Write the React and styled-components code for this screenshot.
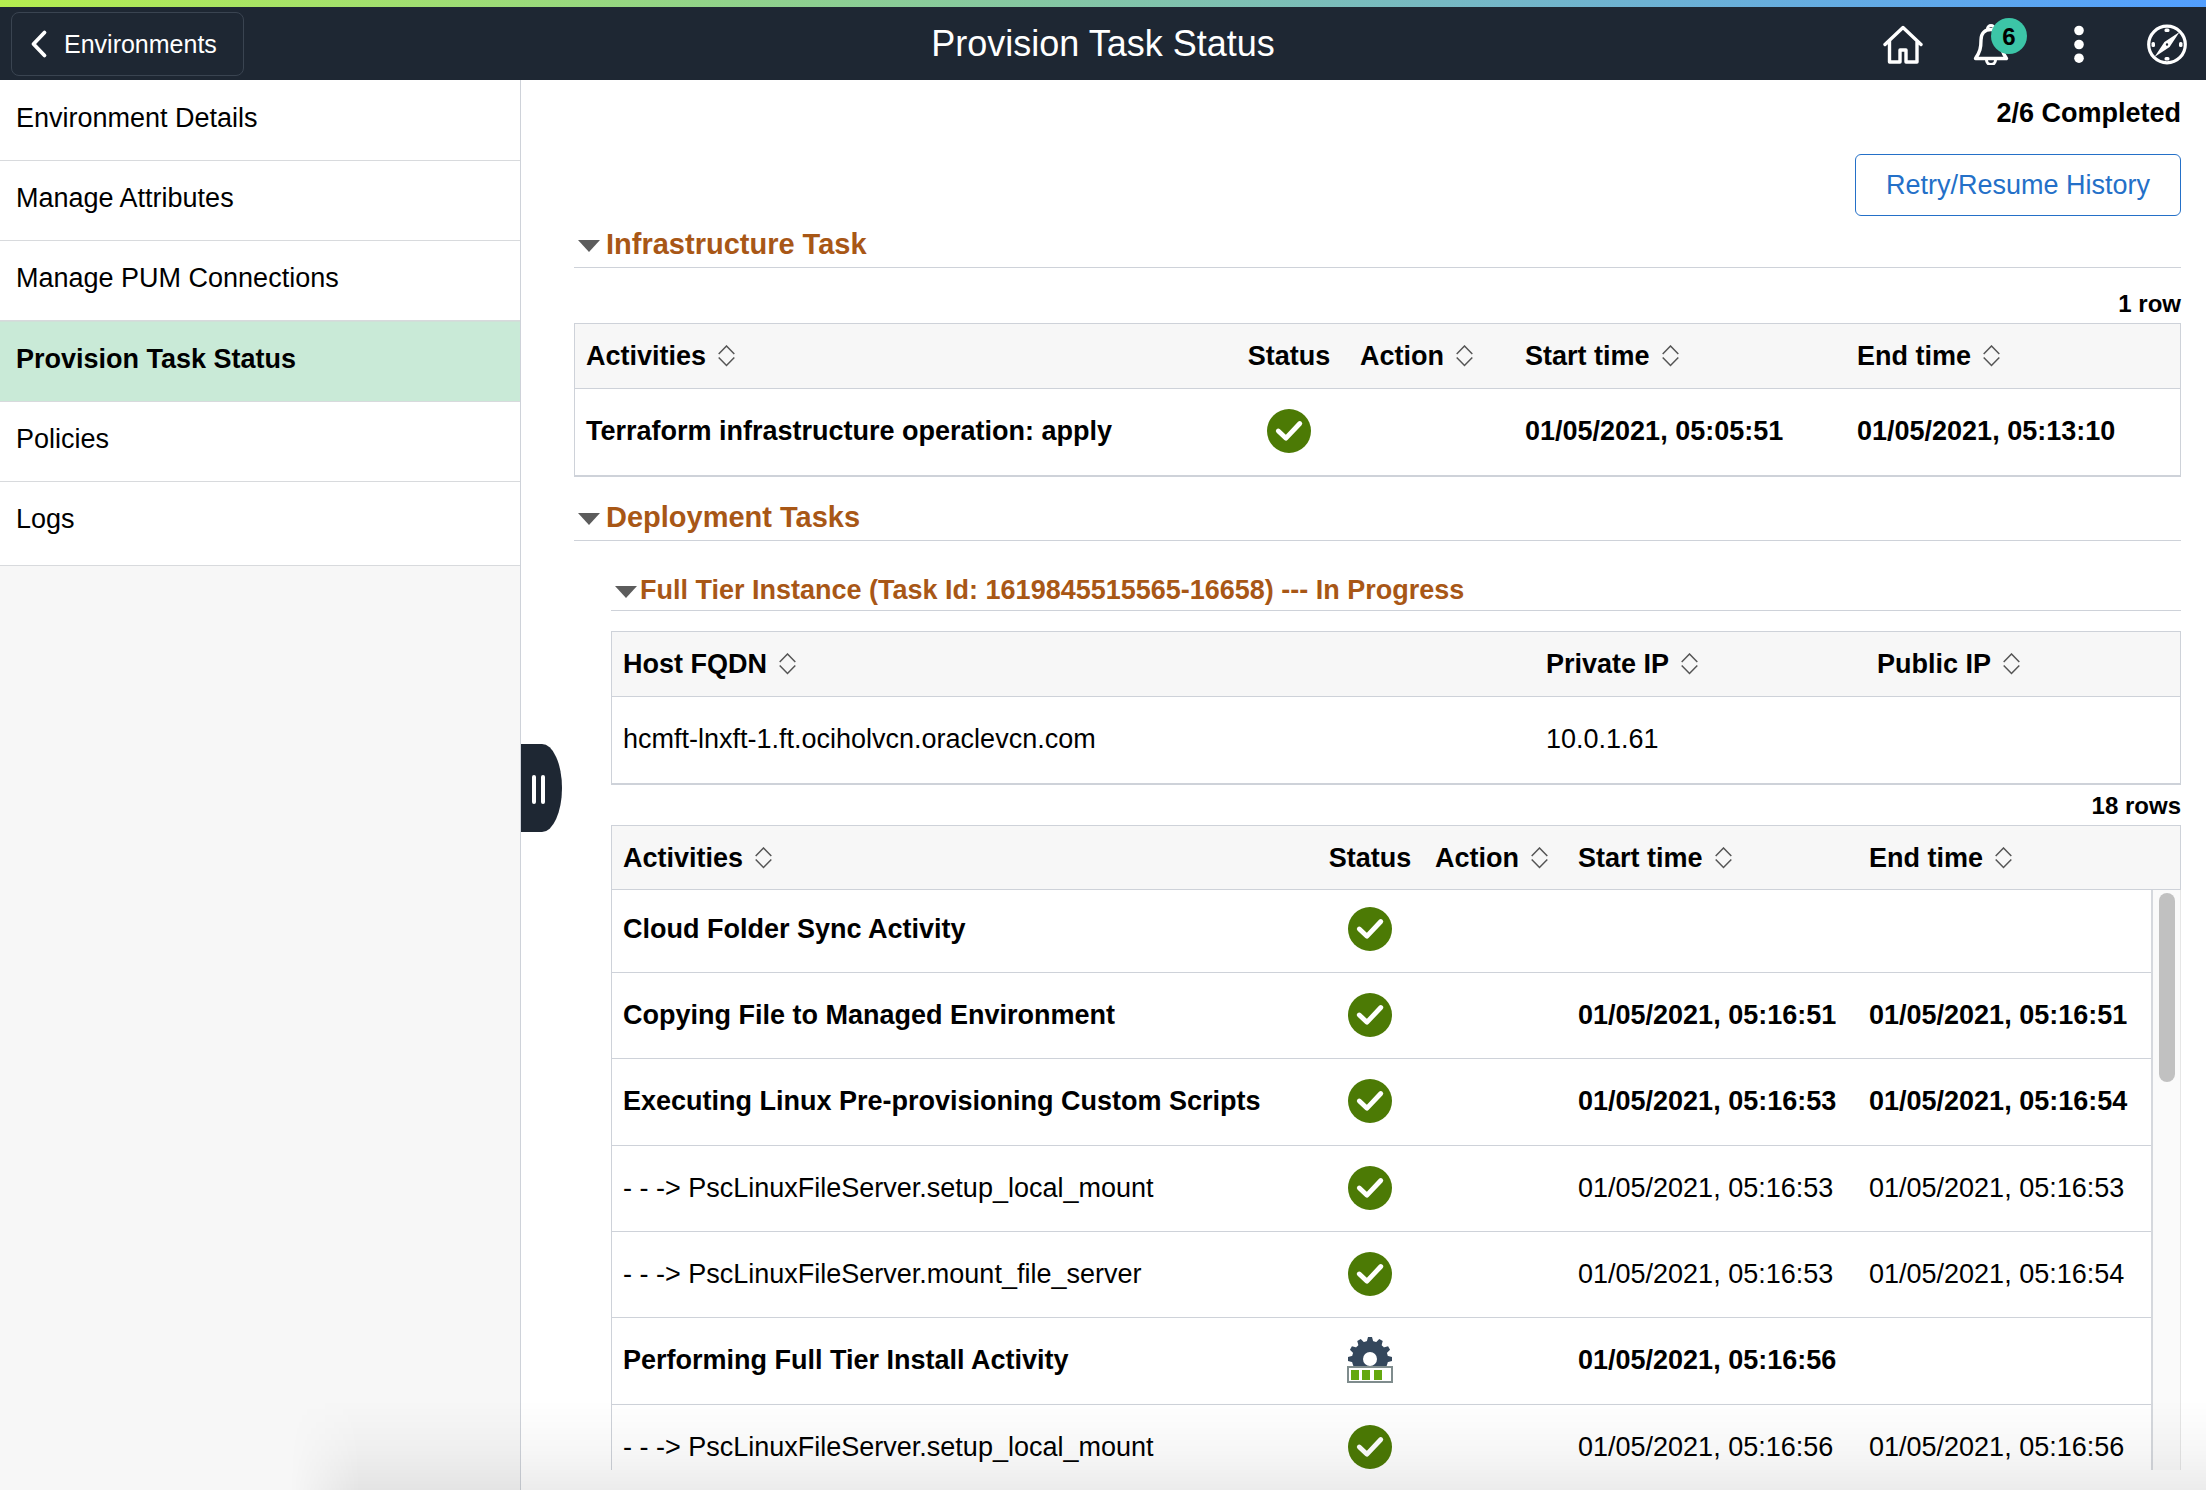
import React, { useState } from "react";
import styled, { createGlobalStyle, css } from "styled-components";

const color = {
  ink: "#000000",
  navy: "#1e2733",
  line: "#ced2d9",
  panel: "#f7f7f7",
  mint: "#c9ead7",
  heading: "#a85716",
  link: "#2470c8",
  badge: "#3cc5a7",
  ok: "#4c7a05",
};

const GlobalStyle = createGlobalStyle`
  * { box-sizing: border-box; }
  body {
    margin: 0;
    background: #ffffff;
    color: ${color.ink};
    font-family: "Liberation Sans", Arial, Helvetica, sans-serif;
    font-size: 27px;
    line-height: 32px;
  }
  button { font: inherit; color: inherit; cursor: pointer; }
  h1, h2, h3, p, ul { margin: 0; padding: 0; }
`;

const Page = styled.div`
  height: 100vh;
  display: flex;
  flex-direction: column;
  overflow: hidden;
`;

/* ---------- banner ---------- */

const Banner = styled.header`
  display: grid;
  grid-template-columns: 1fr auto 1fr;
  align-items: center;
  height: 80px;
  flex: none;
  padding: 7px 11px 0;
  color: #ffffff;
  background:
    linear-gradient(90deg, #b5ee50, #90d28a 33%, #74b7c8 68%, #529fff) top / 100% 7px no-repeat,
    ${color.navy};
`;

const BackButton = styled.button`
  justify-self: start;
  display: flex;
  align-items: center;
  gap: 16px;
  height: 64px;
  padding: 0 26px 0 18px;
  border: 1px solid #3a4451;
  border-radius: 8px;
  background: transparent;
  font-size: 25px;
`;

const PageTitle = styled.h1`
  font-size: 36px;
  line-height: 42px;
  font-weight: 400;
`;

const Tools = styled.div`
  justify-self: end;
  display: flex;
  gap: 48px;
  padding-right: 8px;
`;

const ToolButton = styled.button`
  position: relative;
  display: flex;
  width: 40px;
  height: 42px;
  padding: 0;
  border: 0;
  background: transparent;
`;

const Badge = styled.span`
  position: absolute;
  top: -5px;
  left: 20px;
  width: 36px;
  height: 36px;
  border-radius: 50%;
  background: ${color.badge};
  color: ${color.ink};
  font-size: 24px;
  font-weight: 700;
  line-height: 38px;
  text-align: center;
`;

/* ---------- body ---------- */

const Body = styled.div`
  display: flex;
  flex: 1;
  min-height: 0;
`;

const Sidebar = styled.nav`
  position: relative;
  flex: 0 0 521px;
  border-right: 1px solid ${color.line};
  background: ${color.panel};
`;

const NavList = styled.ul`
  list-style: none;
  padding: 1px 0 4px;
  background: #ffffff;
  border-bottom: 1px solid #d8dadd;
`;

const NavLink = styled.a`
  display: block;
  padding: 21px 16px 26px;
  border-bottom: 1px solid #d8dadd;
  color: ${color.ink};
  text-decoration: none;
  li:last-child > & { border-bottom: 0; }
  ${(p) =>
    p.$active &&
    css`
      border-top: 1px solid #d0e0d8;
      background: ${color.mint};
      font-weight: 700;
    `}
`;

const Handle = styled.button`
  position: absolute;
  top: calc(50% - 41px);
  left: calc(100% + 1px);
  z-index: 1;
  display: flex;
  align-items: center;
  gap: 5px;
  width: 41px;
  height: 88px;
  padding: 2px 0 0 11px;
  border: 0;
  border-radius: 0 20px 20px 0 / 0 44px 44px 0;
  background: ${color.navy};
`;

const Grip = styled.span`
  width: 4px;
  height: 29px;
  border-radius: 2px;
  background: #ffffff;
`;

const Main = styled.main`
  flex: 1;
  min-width: 0;
  display: flex;
  flex-direction: column;
  padding: 17px 25px 20px 53px;
`;

const Progress = styled.p`
  font-weight: 700;
  text-align: right;
`;

const HistoryButton = styled.button`
  align-self: flex-end;
  height: 62px;
  margin-top: 25px;
  padding: 0 30px;
  border: 1px solid ${color.link};
  border-radius: 6px;
  background: #ffffff;
  color: ${color.link};
`;

const Section = styled.section`
  display: flex;
  flex-direction: column;
  min-height: 0;
  flex: ${(p) => (p.$fill ? "1" : "none")};
  margin: ${(p) => p.$top}px 0 0 ${(p) => (p.$nested ? 37 : 0)}px;
`;

const Heading = styled.h2`
  flex: none;
  border-bottom: 1px solid ${color.line};
  color: ${color.heading};
  font-size: ${(p) => (p.$small ? 27 : 29)}px;
  line-height: ${(p) => (p.$small ? 32 : 34)}px;
  padding-bottom: ${(p) => (p.$small ? 4 : 6)}px;
`;

const Toggle = styled.button`
  display: flex;
  align-items: center;
  gap: ${(p) => (p.$small ? 3 : 6)}px;
  padding: 0 0 0 4px;
  border: 0;
  background: transparent;
  svg { margin-top: 3px; }
`;

const RowCount = styled.p`
  flex: none;
  margin: ${(p) => p.$top}px 0 5px;
  font-size: 24px;
  line-height: 28px;
  font-weight: 700;
  text-align: right;
`;

/* ---------- tables ---------- */

const Table = styled.table`
  width: 100%;
  flex: none;
  table-layout: fixed;
  border-collapse: separate;
  border-spacing: 0;
  border: 1px solid ${color.line};
  border-bottom-width: 2px;
  margin-top: ${(p) => p.$top || 0}px;
`;

const Th = styled.th`
  height: ${(p) => (p.$short ? 64 : 65)}px;
  padding: 0 11px;
  border-bottom: 1px solid ${color.line};
  background: ${color.panel};
  text-align: ${(p) => (p.$center ? "center" : "left")};
  white-space: nowrap;
`;

const SortButton = styled.button`
  display: flex;
  align-items: center;
  gap: 12px;
  padding: 0;
  border: 0;
  background: transparent;
  font-weight: 700;
`;

const Td = styled.td`
  height: 86px;
  padding: 0 11px 2px;
  font-weight: ${(p) => (p.$bold ? 700 : 400)};
  text-align: ${(p) => (p.$center ? "center" : "left")};
  white-space: nowrap;
  svg { display: block; margin: 0 auto; }
`;

const ScrollFrame = styled.div`
  position: relative;
  flex: 1;
  min-height: 0;
  overflow: hidden;
`;

const ActivityRow = styled.tr`
  ${Td} { border-bottom: 1px solid ${color.line}; }
  ${Td}:last-child { border-bottom: 0; }
  &:first-child ${Td} { height: 83px; padding-bottom: 5px; }
  &:nth-child(3n) ${Td} { height: 87px; }
`;

const Track = styled.div`
  position: absolute;
  top: 65px;
  right: 0;
  bottom: 0;
  width: 30px;
  padding: 3px 6px;
  border-left: 2px solid #d5d8dd;
  border-right: 1px solid #e6e6e6;
  background: #fafafa;
`;

const Thumb = styled.div`
  width: 16px;
  height: 189px;
  border-radius: 8px;
  background: #c1c1c1;
`;

const BottomShade = styled.div`
  position: fixed;
  left: 290px;
  right: 0;
  bottom: 0;
  height: 90px;
  pointer-events: none;
  background: linear-gradient(rgba(0, 0, 0, 0), rgba(0, 0, 0, 0.03) 55%, rgba(0, 0, 0, 0.075));
  mask-image: linear-gradient(90deg, transparent, #000 70px);
`;

/* ---------- drawings ---------- */

const stroke = {
  fill: "none",
  stroke: "currentColor",
  strokeWidth: 3.4,
  strokeLinecap: "round",
  strokeLinejoin: "round",
};

const BackIcon = () => (
  <svg width="18" height="36" viewBox="0 0 18 36" aria-hidden="true">
    <path d="M14.500 6.500 L3.500 18 L14.500 29.500" {...stroke} strokeWidth="3.800" />
  </svg>
);

const HomeIcon = () => (
  <svg width="40" height="42" viewBox="0 0 40 42" aria-hidden="true">
    <path d="M2 21.500 L20 4.500 L38 21.500 M6.500 18 V39 H17 V27 H23 V39 H34 V18" {...stroke} />
  </svg>
);

const BellIcon = () => (
  <svg width="40" height="42" viewBox="0 0 40 42" aria-hidden="true">
    <path d="M4.500 35.500 C9 29 10 25 10 17 C10 10 14 6.500 20 6.500 C26 6.500 30 10 30 17 C30 25 31 29 35.500 35.500 Z" {...stroke} />
    <path d="M16.500 6 A3.500 3.500 0 0 1 23.500 6 M15.500 37 A4.500 4.500 0 0 0 24.500 37" {...stroke} strokeWidth="3" />
  </svg>
);

const DotsIcon = () => (
  <svg width="40" height="42" viewBox="0 0 40 42" fill="currentColor" aria-hidden="true">
    <circle cx="20" cy="7.500" r="4.800" />
    <circle cx="20" cy="21.500" r="4.800" />
    <circle cx="20" cy="35.200" r="4.800" />
  </svg>
);

const CompassIcon = () => (
  <svg width="40" height="42" viewBox="0 0 40 42" aria-hidden="true">
    <circle cx="20" cy="21.500" r="18.300" {...stroke} strokeWidth="3.200" />
    <path
      fillRule="evenodd"
      fill="currentColor"
      d="M32.500 9 L22.600 24 L7.500 34 L17.400 19 Z M20 20.300 A1.200 1.200 0 1 0 20 22.700 A1.200 1.200 0 1 0 20 20.300 Z"
    />
    <g fill="currentColor">
      <rect x="17.500" y="5.500" width="5" height="3.500" rx="1.500" />
      <rect x="17.500" y="34" width="5" height="3.500" rx="1.500" />
      <rect x="4.500" y="19" width="3.500" height="5" rx="1.500" />
      <rect x="32" y="19" width="3.500" height="5" rx="1.500" />
    </g>
  </svg>
);

const Triangle = () => (
  <svg width="22" height="12" viewBox="0 0 22 12" aria-hidden="true">
    <path d="M0 0 H22 L11 12 Z" fill="#5c5c5c" />
  </svg>
);

const SortIcon = () => (
  <svg width="17" height="22" viewBox="0 0 17 22" aria-hidden="true">
    <path
      d="M0.700 9 L8.500 1 L16.300 9 M0.700 12.500 L8.500 20.500 L16.300 12.500"
      fill="none"
      stroke="#555555"
      strokeWidth="1.500"
    />
  </svg>
);

const DoneIcon = () => (
  <svg width="44" height="44" viewBox="0 0 44 44" role="img" aria-label="Completed">
    <circle cx="22" cy="22" r="22" fill={color.ok} />
    <path d="M11.300 22 L19 29.200 L32.800 14.500" {...stroke} stroke="#ffffff" strokeWidth="4.800" />
  </svg>
);

const TEETH = [-90, -60, -30, 0, 30, 60, 90];

const RunningIcon = () => (
  <svg width="46" height="46" viewBox="0 0 46 46" role="img" aria-label="In progress">
    <g fill="#34475c">
      <circle cx="23" cy="22" r="18" />
      {TEETH.map((angle) => (
        <path key={angle} d="M19.500 5.500 L21 0 H25 L26.500 5.500 Z" transform={`rotate(${angle} 23 22)`} />
      ))}
    </g>
    <circle cx="23" cy="22" r="7" fill="#ffffff" />
    <rect x="1" y="30" width="44" height="15" fill="#ffffff" stroke="#7f8c8d" strokeWidth="2" />
    <g fill="#64a80f">
      <rect x="4" y="33" width="8" height="10" />
      <rect x="15" y="33" width="8" height="10" />
      <rect x="27" y="33" width="8" height="10" />
    </g>
  </svg>
);

/* ---------- data ---------- */

const NAV = [
  "Environment Details",
  "Manage Attributes",
  "Manage PUM Connections",
  "Provision Task Status",
  "Policies",
  "Logs",
];

const INFRA = [
  {
    name: "Terraform infrastructure operation: apply",
    bold: true,
    status: "done",
    start: "01/05/2021, 05:05:51",
    end: "01/05/2021, 05:13:10",
  },
];

const ACTIVITIES = [
  { name: "Cloud Folder Sync Activity", bold: true, status: "done", start: "", end: "" },
  { name: "Copying File to Managed Environment", bold: true, status: "done", start: "01/05/2021, 05:16:51", end: "01/05/2021, 05:16:51" },
  { name: "Executing Linux Pre-provisioning Custom Scripts", bold: true, status: "done", start: "01/05/2021, 05:16:53", end: "01/05/2021, 05:16:54" },
  { name: "- - -> PscLinuxFileServer.setup_local_mount", status: "done", start: "01/05/2021, 05:16:53", end: "01/05/2021, 05:16:53" },
  { name: "- - -> PscLinuxFileServer.mount_file_server", status: "done", start: "01/05/2021, 05:16:53", end: "01/05/2021, 05:16:54" },
  { name: "Performing Full Tier Install Activity", bold: true, status: "running", start: "01/05/2021, 05:16:56", end: "" },
  { name: "- - -> PscLinuxFileServer.setup_local_mount", status: "done", start: "01/05/2021, 05:16:56", end: "01/05/2021, 05:16:56" },
];

/* ---------- parts ---------- */

function Disclosure({ title, small, children, ...rest }) {
  const [open, setOpen] = useState(true);
  return (
    <Section {...rest}>
      <Heading as={small ? "h3" : "h2"} $small={small}>
        <Toggle type="button" $small={small} aria-expanded={open} onClick={() => setOpen(!open)}>
          <Triangle />
          {title}
        </Toggle>
      </Heading>
      {open && children}
    </Section>
  );
}

function SortableTh({ children, ...rest }) {
  return (
    <Th scope="col" {...rest}>
      <SortButton type="button">
        {children}
        <SortIcon />
      </SortButton>
    </Th>
  );
}

function ActivityHead({ short, gutter }) {
  return (
    <thead>
      <tr>
        <SortableTh $short={short}>Activities</SortableTh>
        <Th scope="col" $short={short} $center>Status</Th>
        <SortableTh $short={short}>Action</SortableTh>
        <SortableTh $short={short}>Start time</SortableTh>
        <SortableTh $short={short}>End time</SortableTh>
        {gutter && <Th as="td" $short={short} />}
      </tr>
    </thead>
  );
}

function ActivityCells({ item }) {
  return (
    <>
      <Td $bold={item.bold}>{item.name}</Td>
      <Td $center>{item.status === "done" ? <DoneIcon /> : <RunningIcon />}</Td>
      <Td />
      <Td $bold={item.bold}>{item.start}</Td>
      <Td $bold={item.bold}>{item.end}</Td>
    </>
  );
}

function Columns({ widths }) {
  return (
    <colgroup>
      <col />
      {widths.map((w, i) => (
        <col key={i} width={w} />
      ))}
    </colgroup>
  );
}

export default function App() {
  return (
    <Page>
      <GlobalStyle />
      <Banner>
        <BackButton type="button">
          <BackIcon />
          Environments
        </BackButton>
        <PageTitle>Provision Task Status</PageTitle>
        <Tools>
          <ToolButton type="button" aria-label="Home"><HomeIcon /></ToolButton>
          <ToolButton type="button" aria-label="Notifications">
            <BellIcon />
            <Badge>6</Badge>
          </ToolButton>
          <ToolButton type="button" aria-label="Actions"><DotsIcon /></ToolButton>
          <ToolButton type="button" aria-label="Navigator"><CompassIcon /></ToolButton>
        </Tools>
      </Banner>

      <Body>
        <Sidebar>
          <NavList>
            {NAV.map((label) => {
              const active = label === "Provision Task Status";
              return (
                <li key={label}>
                  <NavLink href="#" $active={active} aria-current={active ? "page" : undefined}>
                    {label}
                  </NavLink>
                </li>
              );
            })}
          </NavList>
          <Handle type="button" aria-label="Collapse side panel">
            <Grip />
            <Grip />
          </Handle>
        </Sidebar>

        <Main>
          <Progress>2/6 Completed</Progress>
          <HistoryButton type="button">Retry/Resume History</HistoryButton>

          <Disclosure title="Infrastructure Task" $top={11}>
            <RowCount $top={22}>1 row</RowCount>
            <Table>
              <Columns widths={[120, 165, 332, 334]} />
              <ActivityHead />
              <tbody>
                {INFRA.map((item) => (
                  <tr key={item.name}><ActivityCells item={item} /></tr>
                ))}
              </tbody>
            </Table>
          </Disclosure>

          <Disclosure title="Deployment Tasks" $top={23} $fill>
            <Disclosure
              title="Full Tier Instance (Task Id: 1619845515565-16658) --- In Progress"
              small
              $top={33}
              $nested
              $fill
            >
              <Table $top={20}>
                <Columns widths={[331, 314]} />
                <thead>
                  <tr>
                    <SortableTh>Host FQDN</SortableTh>
                    <SortableTh>Private IP</SortableTh>
                    <SortableTh>Public IP</SortableTh>
                  </tr>
                </thead>
                <tbody>
                  <tr>
                    <Td>hcmft-lnxft-1.ft.ociholvcn.oraclevcn.com</Td>
                    <Td>10.0.1.61</Td>
                    <Td />
                  </tr>
                </tbody>
              </Table>

              <RowCount $top={7}>18 rows</RowCount>
              <ScrollFrame>
                <Table>
                  <Columns widths={[108, 143, 291, 293, 29]} />
                  <ActivityHead short gutter />
                  <tbody>
                    {ACTIVITIES.map((item, i) => (
                      <ActivityRow key={i}>
                        <ActivityCells item={item} />
                        <Td />
                      </ActivityRow>
                    ))}
                  </tbody>
                </Table>
                <Track><Thumb /></Track>
              </ScrollFrame>
            </Disclosure>
          </Disclosure>
        </Main>
      </Body>
      <BottomShade />
    </Page>
  );
}
